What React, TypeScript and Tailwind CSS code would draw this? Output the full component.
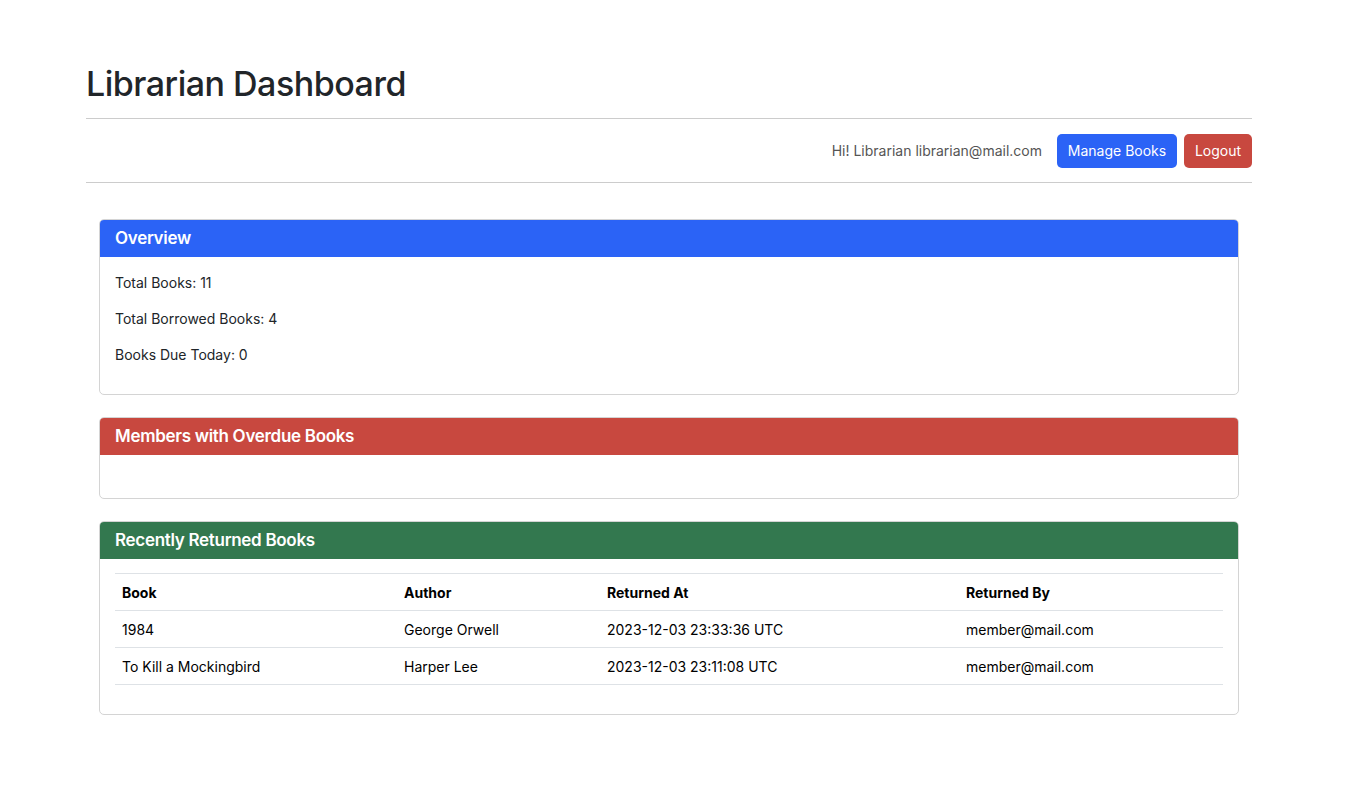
const overview = [
  "Total Books: 11",
  "Total Borrowed Books: 4",
  "Books Due Today: 0",
];

const returned = [
  { book: "1984", author: "George Orwell", at: "2023-12-03 23:33:36 UTC", by: "member@mail.com" },
  { book: "To Kill a Mockingbird", author: "Harper Lee", at: "2023-12-03 23:11:08 UTC", by: "member@mail.com" },
];

const Card = ({ title, color, children }: { title: string; color: string; children?: React.ReactNode }) => {
  return (
    <div className="border border-[#d4d4d4] rounded-[5px] overflow-hidden">
      <div className={`${color} text-white text-[17px] font-semibold tracking-[-0.3px] h-[37px] flex items-center px-[15px]`}>
        {title}
      </div>
      {children}
    </div>
  );
};

export default function App() {
  return (
    <div className="min-h-screen bg-white text-[#212529]" style={{ fontFamily: "Inter, 'Liberation Sans', sans-serif" }}>
      <div className="w-[1166px] ml-[86px] pt-[60px]">
        <h1 className="text-[34px] font-medium leading-[48px] tracking-[-0.5px] pb-[10px]">Librarian Dashboard</h1>
        <div className="border-t border-[#cccccc]" />
        <div className="flex justify-end items-center gap-[7px] h-[63px]">
          <span className="text-[14px] text-[#555] mr-[8px]">Hi! Librarian librarian@mail.com</span>
          <button className="h-[34px] w-[120px] rounded-[5px] bg-[#2b63f6] text-white text-[14px]">Manage Books</button>
          <button className="h-[34px] w-[68px] rounded-[5px] bg-[#c8483f] text-white text-[14px]">Logout</button>
        </div>
        <div className="border-t border-[#cccccc]" />

        <div className="ml-[13px] w-[1140px] mt-[36px] flex flex-col gap-[22px]">
          <Card title="Overview" color="bg-[#2b63f6]">
            <div className="px-[15px] pt-[17px] pb-[30px] text-[14px] flex flex-col gap-[18px]">
              {overview.map((t) => (
                <p key={t} className="leading-[18px]">{t}</p>
              ))}
            </div>
          </Card>

          <Card title="Members with Overdue Books" color="bg-[#c8483f]">
            <div className="h-[43px]" />
          </Card>

          <Card title="Recently Returned Books" color="bg-[#33784f]">
            <div className="px-[15px] pt-[14px] pb-[29px]">
              <table className="w-full text-[14px] border-collapse text-black">
                <thead>
                  <tr className="border-t border-b border-[#dee2e6] h-[37px]">
                    <th className="text-left font-bold px-[7px] w-[282px]">Book</th>
                    <th className="text-left font-bold px-[7px] w-[203px]">Author</th>
                    <th className="text-left font-bold px-[7px] w-[359px]">Returned At</th>
                    <th className="text-left font-bold px-[7px]">Returned By</th>
                  </tr>
                </thead>
                <tbody>
                  {returned.map((r) => (
                    <tr key={r.book} className="border-b border-[#dee2e6] h-[37px]">
                      <td className="px-[7px]">{r.book}</td>
                      <td className="px-[7px]">{r.author}</td>
                      <td className="px-[7px]">{r.at}</td>
                      <td className="px-[7px]">{r.by}</td>
                    </tr>
                  ))}
                </tbody>
              </table>
            </div>
          </Card>
        </div>
      </div>
    </div>
  );
}
